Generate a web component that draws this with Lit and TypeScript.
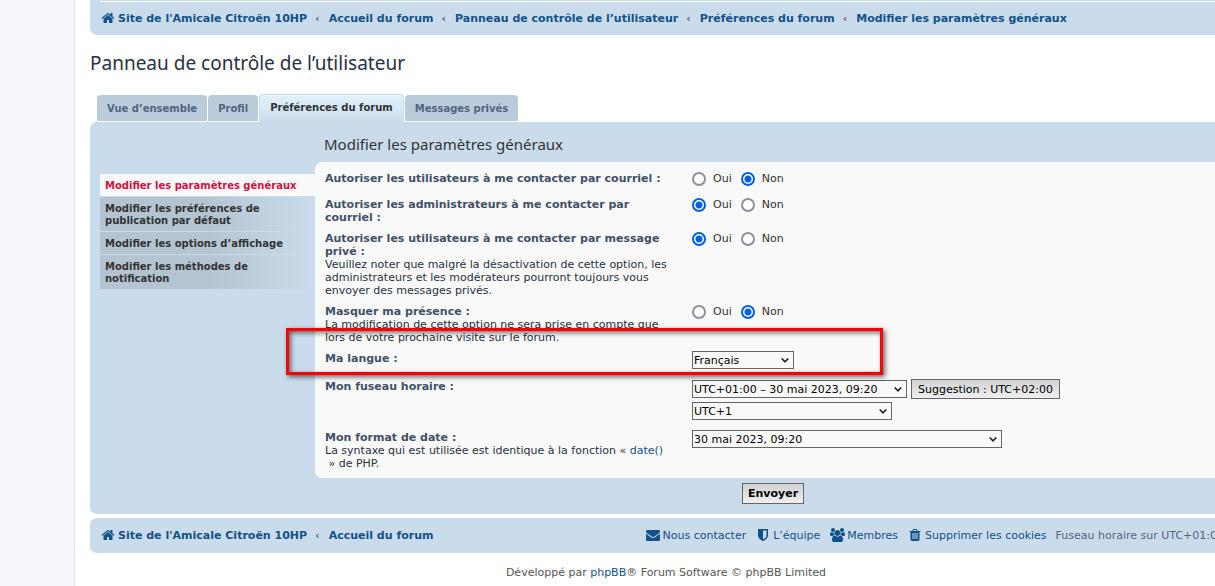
import { LitElement, html, svg, css } from "lit";
import { customElement, property } from "lit/decorators.js";

const ICONS: Record<string, { w: number; d: string }> = {
  home: { w: 1792, d: "M1472 992v480q0 26-19 45t-45 19h-384v-384h-256v384h-384q-26 0-45-19t-19-45v-480q0-1 .5-3t.5-3l575-474 575 474q1 2 1 6zm223-69l-62 74q-8 9-21 11h-3q-13 0-21-7l-692-577-692 577q-12 8-24 7-13-2-21-11l-62-74q-8-10-7-23.5t11-21.5l719-599q32-26 76-26t76 26l244 204v-195q0-14 9-23t23-9h192q14 0 23 9t9 23v408l219 182q10 8 11 21.5t-7 23.5z" },
  envelope: { w: 1792, d: "M1792 710v794q0 66-47 113t-113 47h-1472q-66 0-113-47t-47-113v-794q44 49 101 87 362 246 497 345 57 42 92.5 65.5t94.5 48 110 24.5h2q51 0 110-24.5t94.5-48 92.5-65.5q170-123 498-345 57-39 100-87zm0-294q0 79-49 151t-122 123q-376 261-468 325-10 7-42.5 31t-54 38.5-52 32.5-57.5 27-50 9h-2q-23 0-50-9t-57.5-27-52-32.5-54-38.5-42.5-31q-91-64-262-182.5t-205-142.5q-62-42-117-115.5t-55-136.5q0-78 41.5-130t118.5-52h1472q65 0 112.5 47t47.5 113z" },
  shield: { w: 1792, d: "M1344 960v-640h-448v1137q119-63 213-137 235-184 235-360zm192-768v768q0 86-33.5 170.5t-83 150-118 127.5-126.5 103-121 77.5-89.5 49.5-42.5 20q-12 6-26 6t-26-6q-16-7-42.5-20t-89.5-49.5-121-77.5-126.5-103-118-127.5-83-150-33.5-170.5v-768q0-26 19-45t45-19h1152q26 0 45 19t19 45z" },
  users: { w: 1920, d: "M593 896q-162 5-265 128h-134q-82 0-138-40.5t-56-118.5q0-353 124-353 6 0 43.5 21t97.5 42.5 119 21.5q67 0 133-23-5 37-5 66 0 139 81 256zm1071 637q0 120-73 189.5t-194 69.5h-874q-121 0-194-69.5t-73-189.5q0-53 3.5-103.5t14-109 26.5-108.5 43-97.5 62-81 85.5-53.5 111.5-20q10 0 43 21.5t73 48 107 48 135 21.5 135-21.5 107-48 73-48 43-21.5q61 0 111.5 20t85.5 53.5 62 81 43 97.5 26.5 108.5 14 109 3.5 103.5zm-1024-1277q0 106-75 181t-181 75-181-75-75-181 75-181 181-75 181 75 75 181zm704 384q0 159-112.5 271.5t-271.5 112.5-271.5-112.5-112.5-271.5 112.5-271.5 271.5-112.5 271.5 112.5 112.5 271.5zm576 225q0 78-56 118.5t-138 40.5h-134q-103-123-265-128 81-117 81-256 0-29-5-66 66 23 133 23 59 0 119-21.5t97.5-42.5 43.5-21q124 0 124 353zm-128-609q0 106-75 181t-181 75-181-75-75-181 75-181 181-75 181 75 75 181z" },
  trash: { w: 1792, d: "M704 1376v-704q0-14-9-23t-23-9h-64q-14 0-23 9t-9 23v704q0 14 9 23t23 9h64q14 0 23-9t9-23zm256 0v-704q0-14-9-23t-23-9h-64q-14 0-23 9t-9 23v704q0 14 9 23t23 9h64q14 0 23-9t9-23zm256 0v-704q0-14-9-23t-23-9h-64q-14 0-23 9t-9 23v704q0 14 9 23t23 9h64q14 0 23-9t9-23zm-544-992h448l-48-117q-7-9-17-11h-317q-10 2-17 11zm928 32v64q0 14-9 23t-23 9h-96v948q0 83-47 143.5t-113 60.5h-832q-66 0-113-58.5t-47-141.5v-952h-96q-14 0-23-9t-9-23v-64q0-14 9-23t23-9h309l70-167q15-37 54-63t79-26h320q40 0 79 26t54 63l70 167h309q14 0 23 9t9 23z" },
};

@customElement("fa-icon")
class FaIcon extends LitElement {
  @property() name = "home";
  static styles = css`
    :host { display: inline-flex; width: 16px; margin: 0 2px 2px 0; justify-content: center; flex: none; }
    .glyph { display: block; height: 14px; width: auto; fill: #105289; }
  `;
  render() {
    const icon = ICONS[this.name];
    return html`<svg class="glyph" viewBox="0 0 ${icon.w} 1792" aria-hidden="true">${svg`<path d=${icon.d}></path>`}</svg>`;
  }
}

@customElement("app-root")
class AppRoot extends LitElement {
  static styles = css`
    :host {
      display: block;
      min-height: 100vh;
      overflow: hidden;
      background: #f5f7fa;
      color: #536482;
      font: 11px/13px "DejaVu Sans", Verdana, sans-serif;
    }
    * { box-sizing: border-box; }
    a { color: #105289; text-decoration: none; }
    ul { list-style: none; margin: 0; padding: 0; }
    .wrap {
      min-height: 100vh;
      margin: 0 -43px 0 74px;
      padding: 0 15px;
      border: solid #e6e9ed;
      border-width: 0 1px;
      background: #fff;
    }
    .bar { background: #cadceb; padding: 0 10px; }
    .bar-top { border-radius: 0 0 7px 7px; padding-top: 1px; }
    .bar-bottom { border-radius: 7px; display: flex; justify-content: space-between; margin-top: 4px; padding-right: 18px; }
    .bar-line { border-top: 1px solid #fff; }
    .crumbs, .links { display: flex; align-items: center; white-space: nowrap; }
    .crumbs { height: 33px; font-weight: 700; }
    .bar-bottom .crumbs, .links { height: 35px; }
    .crumb, .link { display: flex; align-items: center; }
    .crumb + .crumb::before { content: "‹"; padding: 0 9px 0 8px; }
    .links { gap: 9px; }
    .title, .subtitle { font-family: "Noto Sans", "Trebuchet MS", sans-serif; font-weight: 400; margin: 0; }
    .title { color: #28313f; font-size: 19px; line-height: 24px; padding-top: 16px; }
    .tabs { display: flex; align-items: flex-end; gap: 1px; padding: 19px 7px 0; height: 47px; }
    .tab {
      display: block;
      height: 26px;
      margin-bottom: 1px;
      padding: 7px 10px;
      border-radius: 4px 4px 0 0;
      background: #baccd9;
      color: #536482;
      font-size: 10px;
      line-height: 13px;
      font-weight: 700;
      white-space: nowrap;
    }
    .tab-on {
      height: 28px;
      margin-bottom: 0;
      padding: 6px 10px;
      border: 1px solid #cadceb;
      border-bottom: 0;
      background: linear-gradient(#e2f2ff, #cadceb);
      box-shadow: inset 0 1px 0 #e8f5ff;
      color: #333;
    }
    .panel {
      display: grid;
      grid-template-columns: 215px minmax(0, 1fr);
      background: #cadceb;
      border-radius: 7px;
      padding: 0 11px 10px 10px;
    }
    .menu { padding-top: 52px; display: flex; flex-direction: column; gap: 1px; }
    .item {
      display: block;
      padding: 6px 5px 4px;
      background: linear-gradient(to right, #b4c4d1 50%, #cadceb 100%);
      color: #333;
      font-size: 10px;
      line-height: 12px;
      font-weight: 700;
    }
    .item-text { display: block; max-width: 196px; }
    .item-on { background: #f9f9f9; color: #d31141; }
    .subtitle { color: #333; font-size: 15px; line-height: 20px; padding: 12px 9px 8px; }
    .sheet {
      position: relative;
      background: #f9f9f9;
      border-radius: 7px;
      padding: 9px 10px 8px;
      display: flex;
      flex-direction: column;
      gap: 7px;
    }
    .row { display: grid; grid-template-columns: 355px 1fr; column-gap: 12px; }
    .name { padding-top: 1px; color: #28313f; }
    .label { display: block; font-weight: 700; color: #425067; }
    .hint { display: block; }
    .field { display: flex; flex-direction: column; gap: 3px; min-height: 19px; }
    .roomy { min-height: 21px; }
    .tall { min-height: 44px; }
    .line { display: flex; gap: 4px; align-items: center; }
    .radios { display: flex; gap: 9px; padding-top: 1px; }
    .choice { display: flex; gap: 7px; color: #333; }
    .radio {
      appearance: none;
      width: 14px;
      height: 14px;
      margin: 0;
      border: 2px solid #8f8f9d;
      border-radius: 50%;
      background: #fff;
    }
    .radio:checked { border-color: #0060df; background: radial-gradient(circle, #0060df 3px, #fff 4px); }
    .pick { display: inline-grid; align-items: center; align-self: flex-start; }
    .line .pick { align-self: center; }
    .select, .arrow { grid-area: 1 / 1; }
    .select {
      appearance: none;
      height: 18px;
      width: 100%;
      border: 1px solid #666;
      border-radius: 0;
      background: #fafafa;
      color: #000;
      padding: 1px 1px 0;
      font: 11px/15px "DejaVu Sans", Verdana, sans-serif;
    }
    .arrow { justify-self: end; width: 8px; height: 5px; margin-right: 5px; pointer-events: none; fill: none; stroke: #222; stroke-width: 1.6; }
    .w-lang { width: 102px; }
    .w-zone { width: 215px; }
    .w-area { width: 200px; }
    .w-date { width: 310px; }
    .button {
      height: 20px;
      border: 1px solid #666;
      padding: 0 6px;
      background: linear-gradient(#d2d2d2, #efefef);
      color: #000;
      font: 11px/13px "DejaVu Sans", Verdana, sans-serif;
      white-space: nowrap;
    }
    .submit { font-weight: 700; height: 21px; padding: 0 5px; }
    .actions { display: flex; justify-content: center; padding-top: 5px; }
    .callout {
      position: absolute;
      left: -29px;
      top: 166px;
      width: 597px;
      height: 47px;
      border: 3px solid #f00;
      box-shadow: 2px 2px 5px rgba(0, 0, 0, 0.6), inset 2px 2px 5px rgba(0, 0, 0, 0.55);
      pointer-events: none;
    }
    .copyright { margin: 0; padding: 13px 0; text-align: center; font-size: 11px; color: #555; }
  `;

  crumb(text: string, home = false) {
    return html`<li class="crumb"><a class="link" href="#">${home ? html`<fa-icon name="home"></fa-icon>` : ""}${text}</a></li>`;
  }

  link(icon: string, text: string) {
    return html`<li><a class="link" href="#"><fa-icon name=${icon}></fa-icon>${text}</a></li>`;
  }

  radioRow(id: string, label: string, yes: boolean, hint = "") {
    return html`<div class="row">
      <div class="name"><span class="label" id=${id}>${label}</span>${hint ? html`<span class="hint">${hint}</span>` : ""}</div>
      <div class="field">
        <div class="radios" role="radiogroup" aria-labelledby=${id}>
          <label class="choice"><input class="radio" type="radio" name=${id} value="1" ?checked=${yes}>Oui</label>
          <label class="choice"><input class="radio" type="radio" name=${id} value="0" ?checked=${!yes}>Non</label>
        </div>
      </div>
    </div>`;
  }

  pick(id: string, text: string, size: string, name = "") {
    return html`<span class="pick ${size}">
      <select class="select" id=${id} aria-label=${name || text}><option>${text}</option></select>
      <svg class="arrow" viewBox="0 0 8 5" aria-hidden="true"><path d="M.7 .5 4 3.8 7.3 .5"></path></svg>
    </span>`;
  }

  render() {
    const site = "Site de l'Amicale Citroën 10HP";
    const tabs = ["Vue d’ensemble", "Profil", "Préférences du forum", "Messages privés"];
    const items = [
      "Modifier les paramètres généraux",
      "Modifier les préférences de publication par défaut",
      "Modifier les options d’affichage",
      "Modifier les méthodes de notification",
    ];
    return html`<div class="wrap">
      <nav class="bar bar-top">
        <div class="bar-line">
          <ul class="crumbs">
            ${this.crumb(site, true)}${this.crumb("Accueil du forum")}${this.crumb("Panneau de contrôle de l’utilisateur")}
            ${this.crumb("Préférences du forum")}${this.crumb("Modifier les paramètres généraux")}
          </ul>
        </div>
      </nav>
      <h2 class="title">Panneau de contrôle de l’utilisateur</h2>
      <ul class="tabs">
        ${tabs.map((t, i) => html`<li><a href="#" class="tab ${i === 2 ? "tab-on" : ""}">${t}</a></li>`)}
      </ul>
      <form class="panel">
        <ul class="menu">
          ${items.map((t, i) => html`<li><a href="#" class="item ${i === 0 ? "item-on" : ""}"><span class="item-text">${t}</span></a></li>`)}
        </ul>
        <div>
          <h3 class="subtitle">Modifier les paramètres généraux</h3>
          <div class="sheet">
            ${this.radioRow("mail", "Autoriser les utilisateurs à me contacter par courriel :", false)}
            ${this.radioRow("massmail", "Autoriser les administrateurs à me contacter par courriel :", true)}
            ${this.radioRow("pm", "Autoriser les utilisateurs à me contacter par message privé :", true,
              "Veuillez noter que malgré la désactivation de cette option, les administrateurs et les modérateurs pourront toujours vous envoyer des messages privés.")}
            ${this.radioRow("hide", "Masquer ma présence :", false,
              "La modification de cette option ne sera prise en compte que lors de votre prochaine visite sur le forum.")}
            <div class="row">
              <div class="name"><label class="label" for="lang">Ma langue :</label></div>
              <div class="field roomy">${this.pick("lang", "Français", "w-lang", "Ma langue")}</div>
            </div>
            <div class="row">
              <div class="name"><label class="label" for="zone">Mon fuseau horaire :</label></div>
              <div class="field tall">
                <div class="line">
                  ${this.pick("zone", "UTC+01:00 – 30 mai 2023, 09:20", "w-zone", "Mon fuseau horaire")}
                  <button class="button" type="button">Suggestion : UTC+02:00</button>
                </div>
                ${this.pick("area", "UTC+1", "w-area")}
              </div>
            </div>
            <div class="row">
              <div class="name">
                <label class="label" for="date">Mon format de date :</label>
                <span class="hint">La syntaxe qui est utilisée est identique à la fonction « <a href="#">date()</a><br>&nbsp;» de PHP.</span>
              </div>
              <div class="field">${this.pick("date", "30 mai 2023, 09:20", "w-date", "Mon format de date")}</div>
            </div>
            <div class="callout"></div>
          </div>
          <div class="actions"><button class="button submit" type="button">Envoyer</button></div>
        </div>
      </form>
      <nav class="bar bar-bottom">
        <ul class="crumbs">${this.crumb(site, true)}${this.crumb("Accueil du forum")}</ul>
        <ul class="links">
          ${this.link("envelope", "Nous contacter")}${this.link("shield", "L’équipe")}${this.link("users", "Membres")}
          ${this.link("trash", "Supprimer les cookies")}
          <li>Fuseau horaire sur UTC+01:00</li>
        </ul>
      </nav>
      <p class="copyright">Développé par <a href="#">phpBB</a>® Forum Software © phpBB Limited</p>
    </div>`;
  }
}
